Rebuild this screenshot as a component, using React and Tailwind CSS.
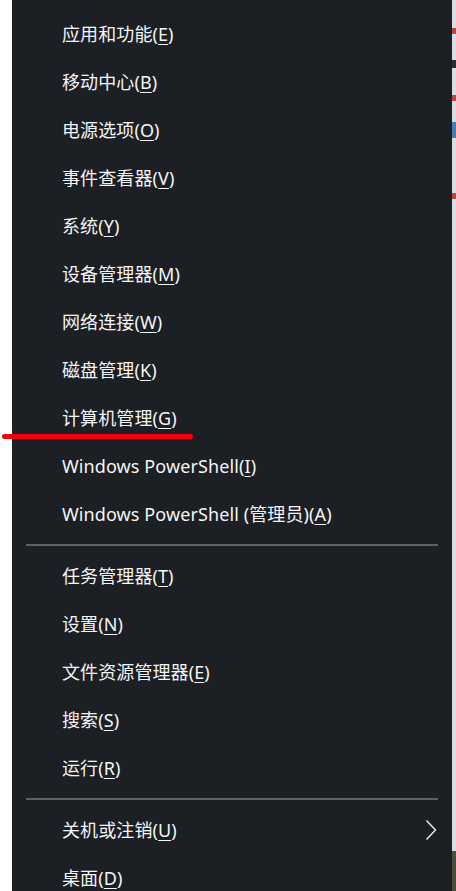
const GROUPS = [
  [
    ['应用和功能', 'E'],
    ['移动中心', 'B'],
    ['电源选项', 'O'],
    ['事件查看器', 'V'],
    ['系统', 'Y'],
    ['设备管理器', 'M'],
    ['网络连接', 'W'],
    ['磁盘管理', 'K'],
    ['计算机管理', 'G', true],
    ['Windows PowerShell', 'I'],
    ['Windows PowerShell (管理员)', 'A'],
  ],
  [
    ['任务管理器', 'T'],
    ['设置', 'N'],
    ['文件资源管理器', 'E'],
    ['搜索', 'S'],
    ['运行', 'R'],
  ],
  [
    ['关机或注销', 'U', false, true],
    ['桌面', 'D'],
  ],
]

function Item({ label, hotkey, marked, submenu }) {
  return (
    <div className="relative flex items-center h-12 pl-[50px] pr-[15px] text-[18px] text-[#f4f5f6]">
      <span className="flex-1 whitespace-nowrap tracking-[0.1px]">
        {label}(<span className="underline underline-offset-[3px] decoration-1">{hotkey}</span>)
      </span>
      {submenu && (
        <svg width="12" height="22" viewBox="0 0 12 22" fill="none" className="text-[#eceef0]">
          <path d="M1.5 1.5 L10.5 11 L1.5 20.5" stroke="currentColor" strokeWidth="1.4" />
        </svg>
      )}
      {marked && (
        <div className="absolute left-[-10px] top-[40px] w-[191px] h-[5px] rounded-full bg-[#f5000a]" />
      )}
    </div>
  )
}

export default function App() {
  return (
    <div className="flex w-[456px] h-[891px] overflow-hidden bg-white" style={{ fontFamily: '"Noto Sans", "Noto Sans CJK SC", sans-serif' }}>
      <div className="w-3 shrink-0 bg-white" />
      <div className="w-[440px] shrink-0 bg-[#1c1f23] pt-[10px]">
        {GROUPS.map((group, gi) => (
          <div key={gi}>
            {gi > 0 && (
              <div className="h-[14px] flex items-center px-[14px]">
                <div className="w-full h-[2px] bg-[#5c6165]" />
              </div>
            )}
            {group.map(([label, hotkey, marked, submenu]) => (
              <Item key={label} label={label} hotkey={hotkey} marked={marked} submenu={submenu} />
            ))}
          </div>
        ))}
      </div>
      {/* sliver of the page behind the menu */}
      <div className="flex-1 flex flex-col bg-[#d9dee3]">
        <div className="h-[28px]" />
        <div className="h-[6px] bg-[#c9423a]" />
        <div className="h-[26px]" />
        <div className="h-[8px] bg-[#2a2e33]" />
        <div className="h-[27px]" />
        <div className="h-[6px] bg-[#c9423a]" />
        <div className="h-[21px]" />
        <div className="h-[16px] bg-[#3b7fc0]" />
        <div className="h-[55px]" />
        <div className="h-[6px] bg-[#c9423a]" />
        <div className="flex-1" />
        <div className="h-[40px] bg-[#4a5030]" />
      </div>
    </div>
  )
}
